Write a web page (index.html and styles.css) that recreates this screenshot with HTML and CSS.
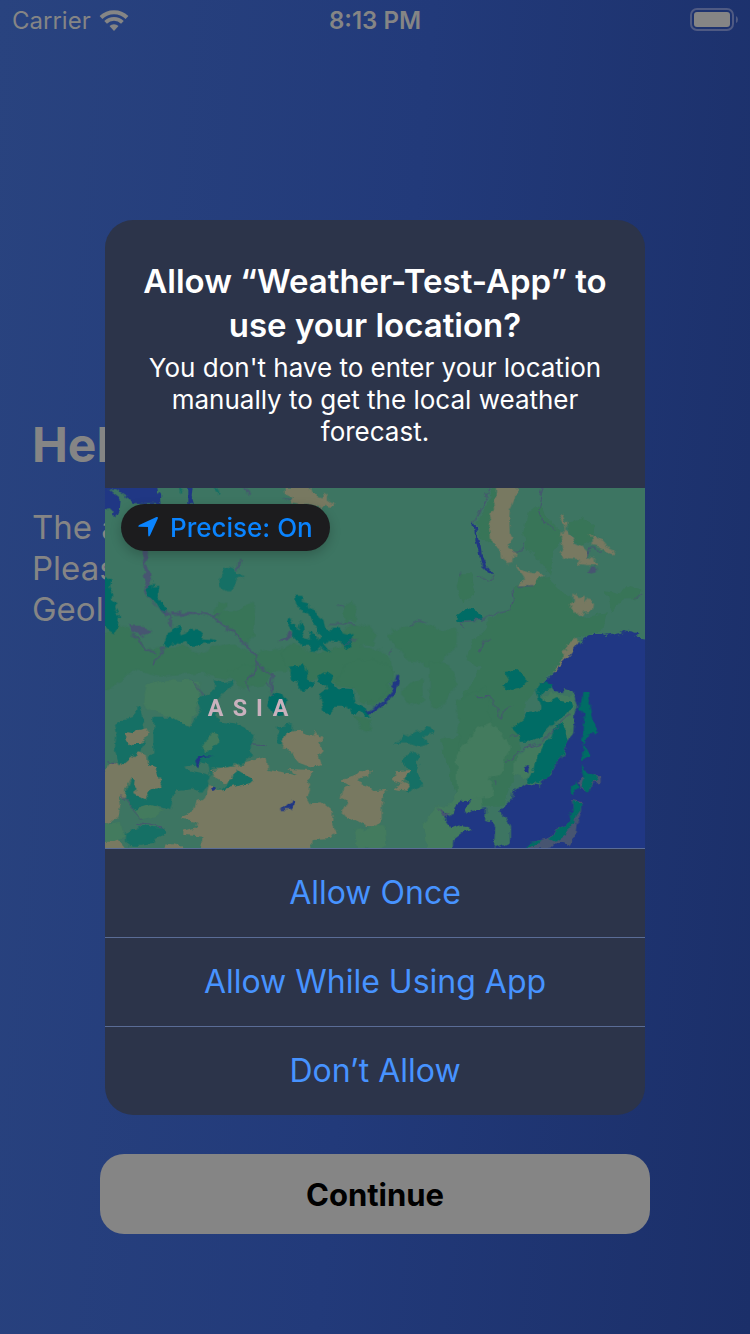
FILE: index.html
```html
<!DOCTYPE html>
<html lang="en">
<head>
<meta charset="utf-8">
<meta name="viewport" content="width=device-width, initial-scale=1">
<title>Weather-Test-App</title>
<link rel="stylesheet" href="styles.css">
</head>
<body>
<div class="screen">
  <header class="status">
    <div class="status-left">
      <span>Carrier</span>
      <svg class="wifi" viewBox="0 0 30 22" aria-hidden="true">
        <path d="M2 8.5a18.6 18.6 0 0 1 26 0" fill="none" stroke="currentColor" stroke-width="4"/>
        <path d="M6.6 13.4a12 12 0 0 1 16.800 0" fill="none" stroke="currentColor" stroke-width="3.800"/>
        <path d="M10.500 17a6.500 6.500 0 0 1 9 0L15 22z" fill="currentColor"/>
      </svg>
    </div>
    <time class="clock">8:13 PM</time>
    <div class="status-right">
      <svg class="battery" viewBox="0 0 48 24" aria-hidden="true">
        <rect x="1" y="1" width="42" height="21" rx="6" fill="none" stroke="#4f5a83" stroke-width="2"/>
        <rect x="4" y="4" width="36" height="15" rx="3" fill="currentColor"/>
        <path d="M46 8q2 1 2 3.500t-2 3.500z" fill="#4f5a83"/>
      </svg>
    </div>
  </header>
  <main class="welcome">
    <h1>Hello!</h1>
    <p>The app<br>Please<br>Geolocation</p>
  </main>
  <footer class="actions"><button class="continue" type="button">Continue</button></footer>
</div>

<div class="overlay">
  <section class="alert" role="dialog" aria-labelledby="alert-title" aria-describedby="alert-text">
    <div class="message">
      <h2 id="alert-title">Allow “Weather-Test-App” to use your location?</h2>
      <p id="alert-text">You don't have to enter your location manually to get the local weather forecast.</p>
    </div>
    <div class="map">
      <svg class="map-art" viewBox="0 0 1620 1080" preserveAspectRatio="xMidYMid slice" role="img" aria-label="Map of Asia">
        <defs>
          <filter id="rough" x="0" y="0" width="1620" height="1080" filterUnits="userSpaceOnUse" color-interpolation-filters="sRGB">
            <feTurbulence type="fractalNoise" baseFrequency="0.035" numOctaves="3" seed="4"/>
            <feDisplacementMap in="SourceGraphic" scale="24" xChannelSelector="R" yChannelSelector="G"/>
          </filter>
        </defs>
        <rect width="1620" height="1080" fill="#3d7562"/>
        <g filter="url(#rough)">
          <g class="dark">
            <path transform="translate(-15 -24)" d="M340 410 355 365 380 370 365 395 410 390 462 365 460 460 440 490 400 460 370 430zM-10 480 60 430 100 460 145 510 190 500 250 500 300 520 345 500 400 490 460 520 570 500 560 580 420 570 380 600 300 580 180 590 100 570 40 620-10 640z"/>
            <path transform="translate(525 -24)" d="M190 375 210 362 228 375 225 420 200 430 190 410zM180 460 230 430 270 440 290 465 275 495 240 500 300 510 330 540 340 570 330 640 280 680 230 630 150 600 60 600 20 560 0 520 40 490 100 522 180 500zM320 460 370 440 420 425 450 440 490 450 530 450 530 500 500 520 480 555 440 560 420 545 380 540 360 510 340 500z"/>
            <path transform="translate(1065 -24)" d="M50 130 75 80 100 24 108 24 95 190 60 170zM0 280 30 280 45 340 10 370-10 320zM190 160 200 100 240 70 260 110 300 150 305 180 280 215 270 290 230 230 195 200zM320 130 365 112 400 135 395 180 370 200 340 180zM435 330 480 340 500 315 550 330 530 355 490 355 460 395zM160 320 260 290 300 330 330 345 360 415 440 400 430 450 350 475 280 570 200 660 160 900 130 980 0 980-60 780 30 760 10 650 60 560 20 540 40 480 85 440 80 420 150 390 160 360z"/>
            <path transform="translate(525 531)" d="M195 0 270-20 340 10 340 50 300 100 250 115 220 70 170 60zM370 70 425 45 430 110 400 120 370 100zM450-10 510 0 530 60 480 130 450 120zM220 150 270 165 275 195 240 185zM530 110 620 60 640 250 540 270z"/>
            <path transform="translate(-15 531)" d="M380 20 440 0 520 20 500 60 420 70z"/>
          </g>
          <g class="light">
            <path transform="translate(-15 531)" d="M140 60 200 45 300 50 300 100 270 180 230 185 200 150 150 140 130 110z"/>
            <path transform="translate(525 531)" d="M225 500 290 480 315 490 320 545 235 560zM600 370 530 385 500 430 470 425 430 480 440 570 620 570zM540 280 570 270 580 330 535 330z"/>
            <path transform="translate(1065 531)" d="M-10 270 50 190 90 175 120 200 150 240 120 330 90 340 100 390 40 400-10 420z"/>
          </g>
          <g class="forest">
            <path transform="translate(-15 -24)" d="M10 290 35 295 30 325 40 345 35 360 50 370 42 385 50 400 60 410 55 440 42 460 25 450 10 430zM140 315 160 312 158 322 175 320 170 345 185 365 200 385 198 402 180 390 165 365 145 350 135 330zM200 460 215 455 220 445 240 440 245 460 260 455 270 445 285 455 295 450 310 465 310 478 330 480 350 482 345 490 310 490 300 500 275 500 260 485 240 495 215 490 195 502 190 490 198 475z"/>
            <path transform="translate(525 -24)" d="M45 347 68 348 65 365 85 370 88 385 112 395 115 408 130 420 135 440 150 455 160 440 178 440 185 460 205 465 218 462 215 480 200 510 185 488 150 480 140 492 130 490 145 510 150 518 130 510 120 500 100 522 95 500 65 500 45 475 35 445 22 425 25 410 40 415 35 430 50 450 55 425 65 425 68 450 75 475 90 480 88 460 105 465 112 485 118 470 115 440 95 430 85 400 58 395 60 385 48 370z"/>
            <path transform="translate(1065 -24)" d="M-8 405 0 400 20 382 45 385 62 415 60 420 0 422-12 428z"/>
            <path transform="translate(525 531)" d="M35 5 70 0 80 25 85 45 102 50 95 70 65 75 50 50 35 40zM112 35 135 22 155 35 155 50 175 70 215 72 225 110 260 130 272 155 255 155 240 140 215 145 205 125 165 125 150 145 130 135 120 110 120 90 140 75 135 60 115 50zM-30 95-10 80 10 85 20 110 5 150-20 145-35 120z"/>
          </g>
          <g class="wood">
            <path transform="translate(-15 -24)" d="M365 262 385 258 405 265 410 280 428 292 405 300 395 325 385 335 360 320 358 300 370 288zM345 20 352 30 358 45 346 36zM235 20 248 24 240 38z"/>
            <path transform="translate(-15 531)" d="M160 155 210 155 235 170 275 185 290 150 300 130 290 100 315 90 345 70 345 45 365 55 400 50 395 65 375 75 360 95 345 110 355 170 410 175 440 190 465 210 455 240 455 270 430 290 380 310 335 310 330 345 300 385 275 370 230 375 220 400 210 430 180 420 150 425 130 440 100 435 75 400 80 370 95 340 145 290 160 260zM115 125 125 145 130 190 135 230 125 260 90 290 65 305 55 290 45 250 50 200 45 180 70 165 95 160zM530 185 575 178 570 230 540 235zM75 500 110 490 120 480 160 490 195 490 200 505 165 520 160 540 125 545 95 545 75 530zM360 375 400 340 400 310 425 330 460 345 450 355z"/>
            <path transform="translate(525 531)" d="M365 290 390 262 420 268 410 285 415 300 410 325 430 360 410 370 380 383 372 375 390 358 385 345 365 340 372 330 390 325zM345 235 365 225 370 208 385 215 400 205 430 198 440 185 465 195 460 205 425 212 448 232 440 240 415 245 385 235z"/>
          </g>
          <g class="steppe">
            <path transform="translate(525 -24)" d="M20 20H90L95 40 112 48 125 52 130 42 143 45 140 58 150 65 163 68 160 78 145 75 135 72 125 85 95 72 60 72 30 66 38 50 20 42z"/>
            <path transform="translate(1065 -24)" d="M108 10 170 10 165 55 150 90 148 120 150 165 155 175 148 180 140 190 150 205 168 215 158 250 140 252 125 230 122 205 110 200 95 185 90 150 95 125 88 100 102 95 100 65 108 50zM297 100 308 102 320 130 315 140 330 165 345 190 370 200 385 215 380 228 410 235 400 242 410 255 380 255 358 252 355 238 325 235 297 222 310 205 302 180 305 160 315 150 310 125zM388 160 410 175 430 185 440 200 467 212 460 224 440 215 415 200 395 195 395 178zM168 255 200 275 225 280 240 275 248 290 230 300 225 320 172 320 185 305 195 295zM340 343 358 355 372 350 370 370 382 358 402 365 400 390 370 392 362 410 345 400 332 370 342 365zM350 472 360 490 300 570 285 580 280 570 305 540 305 515 320 510 318 495 335 485z"/>
            <path transform="translate(-15 531)" d="M-5 350 30 290 55 295 60 305 90 280 115 262 140 270 145 300 170 310 185 365 155 370 140 400 100 385 108 345 90 340 75 370 75 400 55 390 60 430 50 460 25 475-5 500zM75 200 100 205 110 195 145 190 140 215 120 240 100 240 80 225zM330 315 400 308 440 290 500 275 505 315 540 320 590 335 572 312 640 315 617 340 630 375 622 400 632 418 665 415 698 440 697 480 708 500 695 522 640 525 628 535 650 570 300 570 310 515 250 510 250 500 285 490 290 470 245 465 245 455 280 440 290 410 310 405 325 360 360 375 400 365 450 355 460 345 430 330 405 315 400 345 370 352 350 340zM-5 535 50 520 75 550-5 570zM185 560 200 535 250 545 260 560z"/>
            <path transform="translate(525 531)" d="M20 200 65 197 75 207 100 215 110 197 128 222 115 235 128 255 115 270 125 300 105 307 75 300 60 295 35 265 15 245 5 245zM180 345 225 330 240 315 272 318 270 335 235 340 230 350 260 360 280 378 325 375 310 395 305 420 305 465 285 485 255 482 220 460 185 440 200 410 185 395 190 370 210 362zM350 322 390 318 375 335 365 350 390 360 380 375 345 368 365 355 338 345z"/>
          </g>
          <g transform="translate(-15 531)">
            <path class="light" d="M330 205 355 210 350 240 320 262 305 250 325 225zM100 435 150 420 190 430 170 450 120 460zM5 480 60 470 75 510 40 530 5 530z"/>
            <path fill="#3d7562" d="M255 305 300 295 325 300 330 330 310 325 260 315z"/>
          </g>
          <g class="sea">
            <path transform="translate(-15 -24)" d="M0 10 165 10 168 40 183 45 185 72 95 72 90 60 60 40 45 30 28 28 62 55 60 80 50 100 45 110 33 108 35 92 20 95 0 85zM262 10 282 10 278 50 285 72 262 72z"/>
            <path transform="translate(1065 531)" d="M250 55 300 0 330-30 370-80 390-93 430-93 435-87 480-97 490-105 520-100 535-95 530-85 580-80 640-80V580H105L102 551 130 540 150 530 150 490 140 460 118 440 155 405 160 380 200 355 235 362 270 330 310 270 325 235 340 200 345 150 357 125 350 95 335 75 310 68 305 85 285 80 275 65 250 60zM-50 445-30 455-10 420 8 407 28 408 12 435 22 448 40 437 78 430 75 468 98 475 105 490 100 580-25 580-20 525 10 502 35 490 20 482 0 480-25 490-40 470z"/>
          </g>
          <g transform="translate(1065 531)">
            <path class="light" d="M245 100 270 82 300 90 345 95 348 125 338 200 325 228 310 200 305 170 330 140zM160 290 200 250 240 235 255 240 230 280 225 310 200 345 160 330z"/>
            <path class="forest" d="M155 190 190 165 200 145 230 140 245 130 235 100 230 75 245 55 275 58 275 72 250 75 240 95 260 110 290 100 335 108 340 125 320 150 290 165 270 190 245 215 210 230 180 230 175 210zM285 180 315 178 315 200 325 235 300 285 260 340 235 358 205 350 225 310 230 280 245 245 275 215zM127 65 150 45 135 20 165 18 180 25 205 45 195 55 180 72 155 75zM368 85 382 80 388 110 400 160 407 205 388 205 380 235 370 230 368 190 370 150 360 130zM370 235 380 250 390 270 378 275 368 288 366 265z"/>
            <path class="stone" d="M350 350 375 335 422 333 422 355 400 355 388 375 362 370zM335 405 365 410 362 450 350 480 345 520 325 540 300 530 270 545 215 550 185 560 215 530 265 520 290 490 325 475 340 440z"/>
            <path class="forest" d="M365 300 385 325 405 335 412 348 395 355 388 380 362 365 370 345zM332 365 345 352 355 365 345 380 340 395 332 385zM338 408 365 415 360 440 350 455 345 480 325 490 315 510 285 530 268 522 290 492 325 475 338 440zM190 550 215 530 245 525 230 540z"/>
            <ellipse cx="202" cy="312" rx="7" ry="9" fill="#203784"/>
          </g>
          <g class="stone">
            <path transform="translate(-15 -24)" d="M128 205 148 205 145 240 135 255 150 270 152 300 145 320 135 325 142 345 160 365 180 390 210 398 212 410 195 405 165 375 132 335 138 300 130 260zM85 438 130 442 150 445 158 458 135 460 120 472 110 460 95 455zM213 394 290 397 290 405 215 404z"/>
            <path transform="translate(525 -24)" d="M-5 488 30 458 45 460 20 478z"/>
            <path transform="translate(1065 -24)" d="M380 275 395 262 412 275 405 285z"/>
            <path transform="translate(525 531)" d="M475 430 495 450 510 440 500 460 490 458z"/>
          </g>
          <g class="rivers">
            <path transform="translate(-15 -24)" d="M290 400 340 412 375 440 410 465 440 495 465 525 468 570 440 600M95 460 120 490 145 510 165 520M214 405 212 445M190 500 160 550M340 410 360 402M535 488 570 460M420 240 412 270M430 20 455 50M468 550 520 590 510 640" stroke-width="5"/>
            <path transform="translate(1065 -24)" d="M40 130 65 85 85 40 98 20M250 20 238 65 235 90 248 125 290 150M155 320 160 360 150 390 100 405 60 420 0 425 12 445M100 285 90 300 50 292M160 215 190 212 188 190M55 520 65 490 95 475M380 230 390 205 420 212M172 322 220 320M520 350 550 345"/>
            <path transform="translate(525 -24)" d="M145 430 230 432M172 382 190 378M385 435 410 422 440 428M330 525 335 510M540 290 545 275M10 60 35 55M185 490 230 475"/>
            <path transform="translate(-15 531)" d="M270 45 290 60 310 92M60 385 95 430 125 465M115 475 145 480 195 490M455 240 500 242M25 290 50 295M435 50 450 80M520 90 500 50"/>
            <path transform="translate(1065 531)" d="M140 290 190 252 240 235 270 210 300 175 330 150M50 95 90 95 110 130 120 160M120 160 140 130 155 125M150 220 175 205M105 345 110 360"/>
          </g>
          <g class="sea">
            <path transform="translate(1065 -24)" d="M40 130 46 130 52 165 62 200 67 235 78 256 100 280 92 282 63 255 55 215 45 170z"/>
            <path transform="translate(525 531)" d="M350 22 358 28 355 60 345 85 320 110 300 130 270 145 255 143 300 118 325 90 340 60zM5 435 20 420 28 420 38 405 45 408 42 422 30 435z"/>
            <path transform="translate(-15 531)" d="M280 290Q290 268 340 272L310 278Q290 285 290 308zM328 375 345 365 358 370 345 378z"/>
          </g>
        </g>
        <text class="region" x="308 383 453 503" y="684">ASIA</text>
      </svg>
      <button class="precise" type="button">
        <svg viewBox="0 0 20 20" aria-hidden="true"><path d="M18.500 0Q20.300-.3 19.800 1.500L12 18.600Q10.500 20.500 10.200 18.300L10 10 1.500 9.800Q-.8 9.500 1.200 8z" fill="currentColor"/></svg>
        <span>Precise: On</span>
      </button>
    </div>
    <div class="choices">
      <button type="button">Allow Once</button>
      <button type="button">Allow While Using App</button>
      <button type="button">Don’t Allow</button>
    </div>
  </section>
</div>
</body>
</html>
```

FILE: styles.css
```css
* { box-sizing: border-box; }
body {
  margin: 0;
  font-family: Inter, "Liberation Sans", sans-serif;
  background: linear-gradient(95deg, #29437f, #223a7a 50%, #1b2f69);
  background-attachment: fixed;
}
h1, h2, p { margin: 0; }
button { margin: 0; padding: 0; border: 0; font-family: inherit; cursor: pointer; }

.screen {
  display: flex;
  flex-direction: column;
  min-height: 100vh;
  color: #858585;
}
.status {
  display: grid;
  grid-template-columns: 1fr auto 1fr;
  align-items: center;
  height: 40px;
  padding: 0 12px;
  font-size: 24px;
}
.status-left { display: flex; align-items: center; gap: 8px; }
.status-right { display: flex; justify-content: flex-end; }
.clock { font-weight: 600; }
.wifi { width: 30px; height: 22px; }
.battery { width: 48px; height: 24px; }

.welcome { flex: 1; padding: 375px 32px 0; }
.welcome h1 { font-size: 48px; line-height: 60px; font-weight: 700; }
.welcome p { margin-top: 32px; font-size: 33px; line-height: 41px; }

.actions { padding: 0 100px 100px; }
.continue {
  width: 100%;
  height: 80px;
  border-radius: 24px;
  background: #858585;
  color: #000;
  font-size: 31px;
  font-weight: 700;
}

.overlay {
  position: absolute;
  inset: 0;
  display: flex;
  align-items: center;
  justify-content: center;
}
.alert {
  width: 72%;
  overflow: hidden;
  border-radius: 28px;
  background: #2c344a;
  color: #fff;
}
.message { padding: 39px 32px 40px; text-align: center; }
.message h2 { font-size: 33px; line-height: 44px; font-weight: 600; }
.message p { margin-top: 5px; font-size: 26px; line-height: 32px; }

.map { position: relative; }
.map-art { display: block; width: 100%; height: 360px; }
.dark { fill: #387558; }
.light { fill: #437b5e; }
.forest { fill: #006c65; }
.wood { fill: #157065; }
.steppe { fill: #787961; }
.sea { fill: #203784; }
.stone { fill: #475571; }
.rivers { fill: none; stroke: #475571; stroke-width: 3; }
.region { fill: #c9b1bd; font-family: Roboto, sans-serif; font-size: 70px; font-weight: 700; }

.precise {
  position: absolute;
  top: 16px;
  left: 16px;
  display: flex;
  align-items: center;
  gap: 12px;
  height: 47px;
  padding: 0 17px;
  border-radius: 24px;
  background: #1c1c1e;
  color: #0a84ff;
  font-size: 26px;
  font-weight: 500;
  box-shadow: 0 4px 12px rgba(0, 0, 0, .2);
}
.precise svg { width: 20px; height: 20px; }

.choices button {
  display: block;
  width: 100%;
  height: 89px;
  border-top: 1px solid #5a6c96;
  background: none;
  color: #4793ff;
  font-size: 32px;
}
```
